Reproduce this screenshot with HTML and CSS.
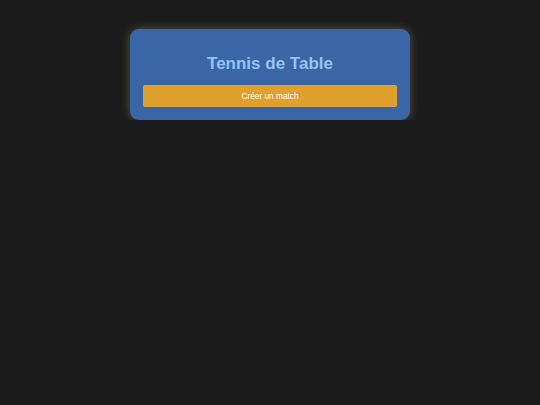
FILE: index.html
```html
<!DOCTYPE html>
<html lang="fr">
<head>
    <meta charset="UTF-8">
    <title>Tennis de Table</title>
    <link rel="stylesheet" href="styles.css">
</head>
<body>
    <div class="container">
        <h1 class="title">Tennis de Table</h1>
        <button class="btn">Créer un match</button>
    </div>
</body>
</html>
```
FILE: styles.css
```css
body {
    margin: 0;
    background: #1c1c1c;
    font-family: "Liberation Sans", Arial, sans-serif;
    display: flex;
    justify-content: center;
    padding-top: 29px;
}

.container {
    width: 254px;
    padding: 13px;
    background: #3a66a8;
    border-radius: 9px;
    box-shadow: 0 0 8px rgba(200, 200, 140, 0.35);
    display: flex;
    flex-direction: column;
}

.title {
    margin: 11px 0 11px;
    font-size: 17px;
    line-height: 21px;
    color: #90c4f2;
    text-align: center;
}

.btn {
    height: 22px;
    border: none;
    border-radius: 2px;
    background: #e0a02e;
    color: #fff;
    font-family: inherit;
    font-size: 8.3px;
    padding: 0;
}
```
